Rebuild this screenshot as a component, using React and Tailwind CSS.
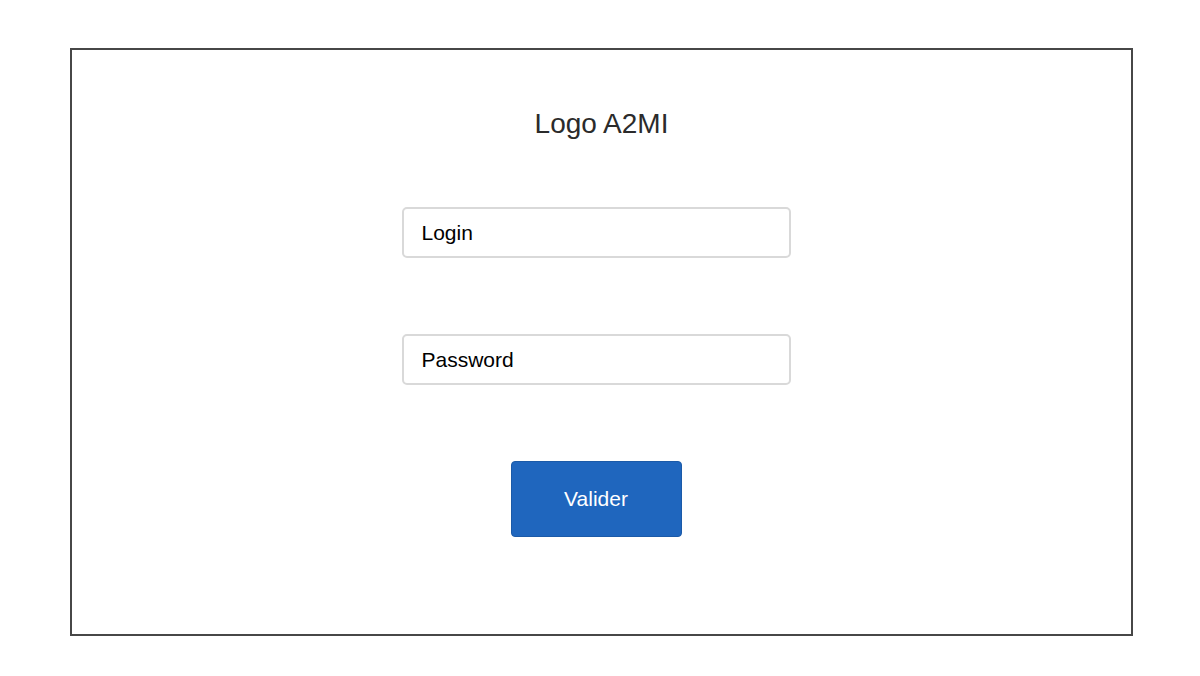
import React, { useState } from "react";

const App = () => {
  const [login, setLogin] = useState("");
  const [password, setPassword] = useState("");

  return (
    <div className="w-[1200px] h-[676px] bg-white pt-[48px] pl-[70px] font-['Liberation_Sans',Arial,sans-serif]">
      <div className="w-[1063px] h-[588px] border-2 border-[#474747] flex flex-col items-center">
        {/* Title */}
        <h1 className="mt-[58px] text-[28px] leading-[32px] text-[#2b2b2b]">
          Logo A2MI
        </h1>

        {/* Form */}
        <form
          onSubmit={(e) => e.preventDefault()}
          className="mt-[67px] mr-[11px] flex flex-col items-center"
        >
          <input
            type="text"
            placeholder="Login"
            value={login}
            onChange={(e) => setLogin(e.target.value)}
            className="w-[389px] h-[51px] px-[18px] border-2 border-[#d9d9d9] rounded-[5px] text-[21px] text-black placeholder:text-black outline-none"
          />
          <input
            type="password"
            placeholder="Password"
            value={password}
            onChange={(e) => setPassword(e.target.value)}
            className="mt-[76px] w-[389px] h-[51px] px-[18px] border-2 border-[#d9d9d9] rounded-[5px] text-[21px] text-black placeholder:text-black outline-none"
          />
          <button
            type="submit"
            className="mt-[76px] w-[171px] h-[76px] bg-[#1f66be] border border-[#1b5aa8] rounded-[4px] text-white text-[21px]"
          >
            Valider
          </button>
        </form>
      </div>
    </div>
  );
};

export default App;
